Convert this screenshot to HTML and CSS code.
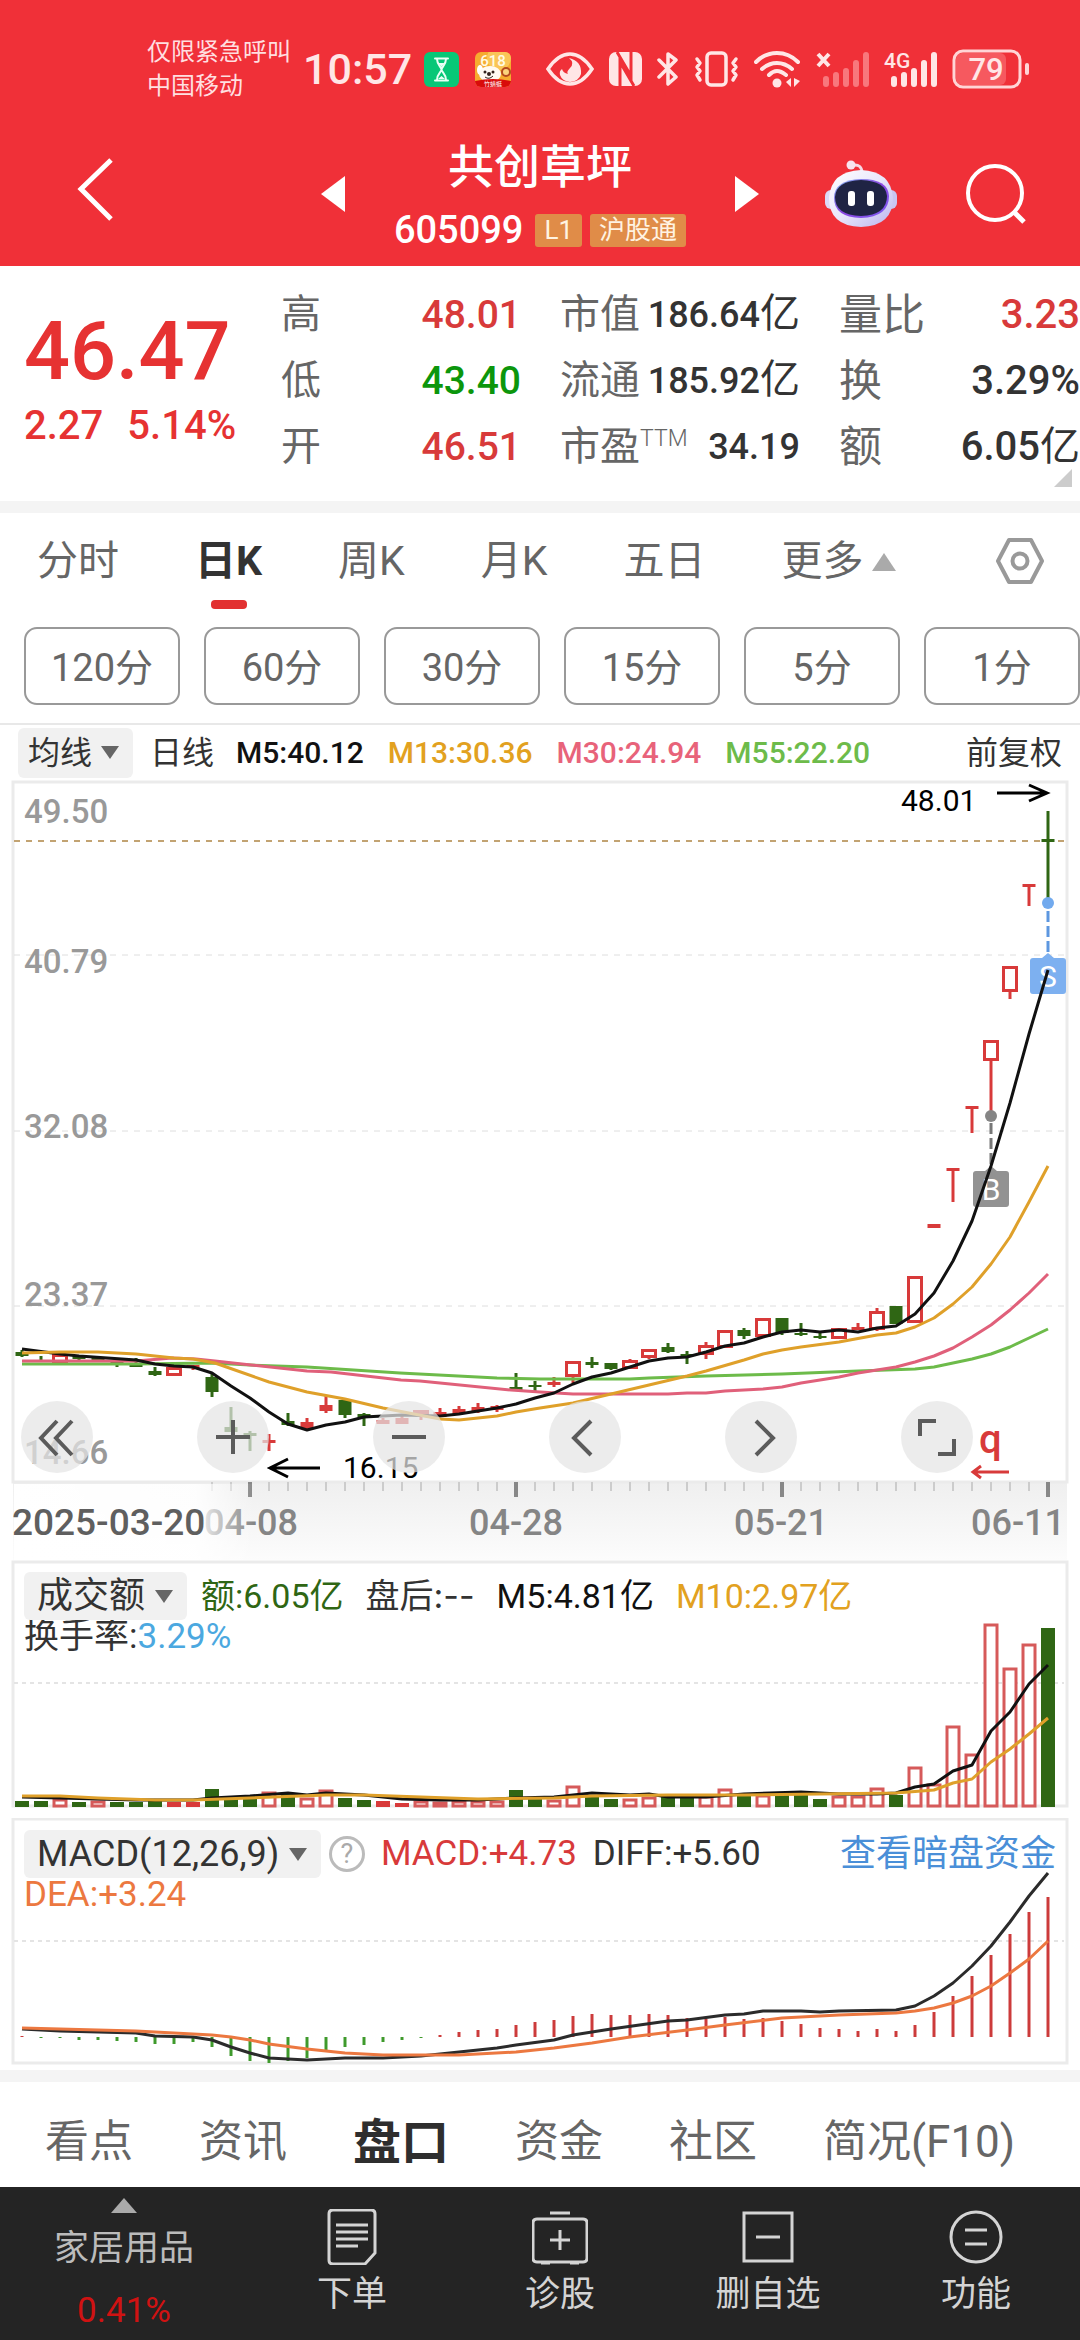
FILE: index.html
```html
<!DOCTYPE html>
<html lang="zh-CN">
<head>
<meta charset="utf-8">
<meta name="viewport" content="width=device-width, initial-scale=1">
<title>共创草坪 605099</title>
<link rel="stylesheet" href="styles.css">
</head>
<body>
<header class="top">
  <div class="status">
    <div class="status-left">
      <div class="carrier"><span>仅限紧急呼叫</span><span>中国移动</span></div>
      <time class="clock">10:57</time>
      <svg width="35" height="35" viewBox="0 0 35 35"><rect width="35" height="35" rx="6" fill="#07c777"/><g fill="none" stroke="#e9fff5" stroke-width="2" stroke-linecap="round"><path d="M11 6.500h13M11 28.500h13M13 7c0 6 4.500 8 4.500 10.500S13 22 13 28M22 7c0 6-4.500 8-4.500 10.500S22 22 22 28"/></g><path d="M14.500 11h6l-3 4zM14 27l3.500-3 3.500 3z" fill="#e9fff5"/></svg>
      <svg class="app" width="36" height="35" viewBox="0 0 36 35"><defs><clipPath id="ac"><rect width="36" height="35" rx="6"/></clipPath></defs><g clip-path="url(#ac)"><rect width="36" height="35" fill="#f6ab2f"/><circle cx="24" cy="6" r="12" fill="#fac557"/><text x="18" y="14" text-anchor="middle" font-size="15" font-weight="500" fill="#fffbe6">618</text><circle cx="31" cy="20" r="4" fill="#fbd37c" stroke="#b4481e" stroke-width="2"/><ellipse cx="5" cy="18" rx="3" ry="5" fill="#fff"/><ellipse cx="15" cy="22" rx="11" ry="8" fill="#fffaf2"/><circle cx="10" cy="20" r="1.500" fill="#33231d"/><circle cx="18" cy="20" r="1.500" fill="#33231d"/><circle cx="14" cy="22" r="2" fill="#33231d"/><path d="M10 25q4 3 8-1" stroke="#33231d" fill="none"/><path d="M0 29q18-4 36 0v6H0z" fill="#d90b0b"/><text x="18" y="34" text-anchor="middle" font-size="6" fill="#fff">竹蜻蜓</text></g></svg>
    </div>
    <div class="status-right">
      <svg width="48" height="34" viewBox="0 0 48 34"><path d="M2 17Q12 2 24 2t22 15Q36 32 24 32T2 17z" fill="none" stroke="#ffe6e6" stroke-width="3.500"/><path d="M23 6q6 5 1 10-4 4-2 6-5-1-6-5-3 2-2 6 2 6 10 7 9-1 11-8 1-13-12-16z" fill="#ffe6e6"/></svg>
      <svg width="33" height="34" viewBox="0 0 33 34"><rect width="33" height="34" rx="7" fill="#ffe6e6"/><path d="M8 0l14 24V0M11 34V10l14 24" fill="none" stroke="#f03038" stroke-width="3"/></svg>
      <svg width="22" height="36" viewBox="0 0 22 36"><path d="M2 9l17 17-8 7V3l8 6L2 26" fill="none" stroke="#ffe6e6" stroke-width="3.500" stroke-linejoin="round" stroke-linecap="round"/></svg>
      <svg width="45" height="36" viewBox="0 0 45 36"><g fill="none" stroke="#ffe6e6" stroke-width="3.500" stroke-linejoin="round" stroke-linecap="round"><rect x="13" y="2" width="19" height="32" rx="4"/><path d="M3 8l3 4-3 4 3 4-3 4 3 5M42 8l-3 4 3 4-3 4 3 4-3 5"/></g></svg>
      <svg width="47" height="38" viewBox="0 0 47 38"><g fill="none" stroke="#ffe6e6" stroke-width="4" stroke-linecap="round"><path d="M2 12Q11 3 23 3t21 9M8 19q7-6 15-6t15 6M15 25q4-4 8-4t9 4"/></g><circle cx="23" cy="33" r="4.500" fill="#ffe6e6"/><path d="M37 28v9l-5-5zM40 28v9l6-6z" fill="#ffe6e6"/></svg>
      <svg width="53" height="36" viewBox="0 0 53 36"><path d="M2 3l11 12M13 3L2 15" stroke="#ffe6e6" stroke-width="4"/><g stroke="#f8787d" stroke-width="6" stroke-linecap="round"><path d="M10 28v5M20 24v9M30 20v13M40 12v21M50 4v29"/></g></svg>
      <svg class="network" width="53" height="36" viewBox="0 0 53 36"><text x="0" y="17" font-size="21" font-weight="500" fill="#ffe6e6">4G</text><g stroke="#ffe6e6" stroke-width="6" stroke-linecap="round"><path d="M10 28v5M20 24v9M30 20v13M40 12v21M50 4v29"/></g></svg>
      <svg width="78" height="40" viewBox="0 0 78 40"><rect x="4" y="4" width="50" height="32" rx="6" fill="#f6595f"/><rect x="2" y="2" width="66" height="36" rx="9" fill="none" stroke="#ffd5d6" stroke-width="3"/><rect x="73" y="14" width="4" height="12" rx="2" fill="#ffd5d6"/><text x="34" y="31" text-anchor="middle" font-size="31" font-weight="500" fill="#ffe6e6">79</text></svg>
    </div>
  </div>
  <nav class="titlebar">
    <div class="nav-left"><button class="plain" aria-label="返回"><svg width="36" height="64" viewBox="0 0 36 64"><path d="M34 2L4 31l30 30" fill="none" stroke="#fff" stroke-width="5"/></svg></button></div>
    <div class="stock">
      <button class="plain" aria-label="上一只"><svg width="24" height="36" viewBox="0 0 24 36"><path d="M24 0v36L0 18z" fill="#fff"/></svg></button>
      <div class="stock-name"><h1>共创草坪</h1><p><span>605099</span><b class="tag">L1</b><b class="tag">沪股通</b></p></div>
      <button class="plain" aria-label="下一只"><svg width="24" height="36" viewBox="0 0 24 36"><path d="M0 0v36l24-18z" fill="#fff"/></svg></button>
    </div>
    <div class="nav-right">
      <button class="plain" aria-label="智能助手"><svg width="72" height="68" viewBox="0 0 72 68"><defs><linearGradient id="rb" x1="0" y1="0" x2="1" y2="1"><stop offset="0" stop-color="#fff"/><stop offset=".5" stop-color="#e9e6fb"/><stop offset="1" stop-color="#b9b4ee"/></linearGradient><linearGradient id="rf" x1="0" y1="0" x2="1" y2="1"><stop offset="0" stop-color="#7fb8f0"/><stop offset=".5" stop-color="#8b46e0"/><stop offset="1" stop-color="#7a5cf0"/></linearGradient></defs><path d="M37 13q0-9-9-8" fill="none" stroke="#f7d9e4" stroke-width="3"/><circle cx="26" cy="5" r="4.500" fill="#f8e4ee"/><rect x="0" y="30" width="12" height="19" rx="6" fill="#dcd9f7"/><rect x="60" y="30" width="12" height="19" rx="6" fill="#c9c5f2"/><path d="M36 10q30 1 32 28 0 28-32 29Q4 66 4 38 6 11 36 10z" fill="url(#rb)"/><path d="M36 19q27 0 28 17 0 21-28 22Q9 57 9 38 9 20 36 19z" fill="url(#rf)"/><path d="M36 20q25 1 26 16 0 19-26 20-26-1-26-19 1-16 26-17z" fill="#1f2444"/><rect x="23" y="31" width="7" height="15" rx="3" fill="#fff"/><rect x="42" y="31" width="7" height="15" rx="3" fill="#fff"/></svg></button>
      <button class="plain" aria-label="搜索"><svg width="60" height="60" viewBox="0 0 60 60"><circle cx="29" cy="29" r="27" fill="none" stroke="#fff" stroke-width="4"/><path d="M48 48l10 10" stroke="#fff" stroke-width="5"/></svg></button>
    </div>
  </nav>
</header>

<main>
<section class="quote">
  <div class="price"><strong>46.47</strong><p><span>2.27</span><span>5.14%</span></p></div>
  <dl><div><dt>高</dt><dd class="up">48.01</dd></div><div><dt>低</dt><dd class="down">43.40</dd></div><div><dt>开</dt><dd class="up">46.51</dd></div></dl>
  <dl class="caps"><div><dt>市值</dt><dd>186.64<i>亿</i></dd></div><div><dt>流通</dt><dd>185.92<i>亿</i></dd></div><div><dt>市盈<sup>TTM</sup></dt><dd>34.19</dd></div></dl>
  <dl class="ratios"><div><dt>量比</dt><dd class="up">3.23</dd></div><div><dt>换</dt><dd>3.29%</dd></div><div><dt>额</dt><dd>6.05<i>亿</i></dd></div></dl>
  <span class="corner"></span>
</section>

<nav class="periods">
  <button>分时</button><button class="active">日K</button><button>周K</button><button>月K</button><button>五日</button><button class="more">更多</button>
  <button class="settings" aria-label="图表设置"><svg width="50" height="48" viewBox="0 0 50 48"><path d="M14 3h22l11 21-11 21H14L3 24z" fill="none" stroke="#999" stroke-width="4" stroke-linejoin="round"/><circle cx="25" cy="24" r="7.500" fill="none" stroke="#999" stroke-width="4"/></svg></button>
</nav>
<div class="minutes"><button>120分</button><button>60分</button><button>30分</button><button>15分</button><button>5分</button><button>1分</button></div>

<div class="averages">
  <label class="picker small"><select aria-label="主图指标"><option>均线</option></select></label>
  <span class="kind">日线</span>
  <div class="values"><span class="c-black">M5:40.12</span><span class="c-gold">M13:30.36</span><span class="c-pink">M30:24.94</span><span class="c-green">M55:22.20</span></div>
  <button class="adjust">前复权</button>
</div>

<section class="kline">
  <svg class="plot" viewBox="0 780 1080 780" role="img" aria-label="日K线图">
    <defs>
      <linearGradient id="ax" x1="0" y1="0" x2="0" y2="1"><stop offset="0" stop-color="#efefef"/><stop offset="1" stop-color="#fcfcfc"/></linearGradient>
      <linearGradient id="fade" x1="0" y1="0" x2="1" y2="0"><stop offset="0" stop-color="#fff"/><stop offset=".76" stop-color="#fff" stop-opacity=".9"/><stop offset="1" stop-color="#fff" stop-opacity="0"/></linearGradient>
    </defs>
    <rect x="13" y="1482" width="1054" height="78" fill="url(#ax)"/>
    <rect x="13" y="782" width="1054" height="700" class="frame"/>
    <path d="M14 955h1050M14 1131h1050M14 1306h1050" class="grid"/>
    <path d="M14 841h1050" class="last"/>
    <g class="scale"><text x="24" y="823">49.50</text><text x="24" y="973">40.79</text><text x="24" y="1138">32.08</text><text x="24" y="1306">23.37</text><text x="24" y="1464">14.66</text></g>
    <g id="candles"></g>
    <path d="M1048 911v44" stroke="#5d97e0" stroke-width="3" stroke-dasharray="11 4"/>
    <path d="M991 1123v44" stroke="#777" stroke-width="3" stroke-dasharray="11 4"/>
    <circle cx="1048" cy="903" r="6" fill="#72aaee"/><circle cx="991" cy="1116" r="6" fill="#858585"/>
    <path d="M1033 958h9l6-5 6 5h9q3 0 3 3v30q0 3-3 3h-30q-3 0-3-3v-30q0-3 3-3z" fill="#7db0f0"/>
    <path d="M976 1171h9l6-5 6 5h9q3 0 3 3v30q0 3-3 3h-30q-3 0-3-3v-30q0-3 3-3z" fill="#929292"/>
    <g class="mark"><text x="1048" y="987">S</text><text x="991" y="1200">B</text></g>
    <g id="ma" class="lines"></g>
    <g class="note"><text x="901" y="811">48.01</text><text x="343" y="1478">16.15</text></g>
    <path d="M997 793h50m-18-8l18 8-18 8M320 1468h-50m18-9l-18 9 18 9" class="arrow"/>
    <text x="979" y="1453" class="q">q</text><path d="M1009 1472h-36m8-6l-8 6 8 6" stroke="#d83a3a" stroke-width="3" fill="none"/>
    <g id="ticks"></g>
    <g class="dates"><text x="251" y="1535">04-08</text><text x="516" y="1535">04-28</text><text x="781" y="1535">05-21</text><text x="1018" y="1535">06-11</text></g>
    <rect x="14" y="1484" width="240" height="76" fill="url(#fade)"/>
    <text x="12" y="1535" class="start">2025-03-20</text>
  </svg>
  <div class="controls">
    <button aria-label="展开"><svg viewBox="0 0 72 72"><path d="M36 20L20 37l16 17M51 20L35 37l16 17"/></svg></button>
    <button aria-label="放大"><svg viewBox="0 0 72 72"><path d="M19 36h34M36 19v34"/></svg></button>
    <button aria-label="缩小"><svg viewBox="0 0 72 72"><path d="M19 36h34"/></svg></button>
    <button aria-label="左移"><svg viewBox="0 0 72 72"><path d="M42 20L25 37l17 17"/></svg></button>
    <button aria-label="右移"><svg viewBox="0 0 72 72"><path d="M31 20l17 17-17 17"/></svg></button>
    <button aria-label="全屏"><svg viewBox="0 0 72 72"><path d="M19 35V20h16M53 38v15H37"/></svg></button>
  </div>
</section>

<section class="panel">
  <svg class="plot" viewBox="0 1560 1080 248" role="img" aria-label="成交额">
    <rect x="13" y="1562" width="1054" height="244" class="frame"/><path d="M14 1683h1050" class="dots"/>
    <g id="volume"></g><g id="volume-ma" class="lines"></g>
  </svg>
  <div class="legend">
    <div class="row"><label class="picker"><select aria-label="副图指标"><option>成交额</option></select></label>
      <span class="c-darkgreen">额:6.05亿</span><span class="dash">盘后:--</span><span class="c-black">M5:4.81亿</span><span class="c-gold">M10:2.97亿</span></div>
    <div class="row second"><span>换手率:<em>3.29%</em></span></div>
  </div>
</section>

<section class="panel">
  <svg class="plot" viewBox="0 1818 1080 247" role="img" aria-label="MACD">
    <rect x="13" y="1819" width="1054" height="244" class="frame"/><path d="M14 1941h1050" class="dots"/>
    <g id="macd"></g><g id="macd-lines" class="lines"></g>
  </svg>
  <div class="legend">
    <div class="row tight"><label class="picker"><select aria-label="副图指标"><option>MACD(12,26,9)</option></select></label>
      <button class="help" aria-label="说明">?</button><span class="c-red">MACD:+4.73</span><span>DIFF:+5.60</span><a href="#funds">查看暗盘资金</a></div>
    <div class="row second"><span class="c-orange">DEA:+3.24</span></div>
  </div>
</section>

<nav class="sections"><a href="#view">看点</a><a href="#news">资讯</a><a href="#book" class="active">盘口</a><a href="#funds">资金</a><a href="#community">社区</a><a href="#profile">简况(F10)</a></nav>
</main>

<footer class="actions">
  <button class="sector"><i></i><span>家居用品</span><b>0.41%</b></button>
  <button><svg width="56" height="56" viewBox="0 0 56 56"><path d="M9 1h38q4 0 4 4v39L41 55H9q-4 0-4-4V5q0-4 4-4zM12 16h32M12 23h32M12 30h32M12 37h22"/></svg><span>下单</span></button>
  <button><svg width="56" height="56" viewBox="0 0 56 56"><path d="M5 10h46q4 0 4 4v35q0 4-4 4H5q-4 0-4-4V14q0-4 4-4zM18 4h20M28 21v20M18 31h20M9 54h9M38 54h9"/></svg><span>诊股</span></button>
  <button><svg width="56" height="56" viewBox="0 0 56 56"><path d="M4 4h48v48H4zM16 28h24"/></svg><span>删自选</span></button>
  <button><svg width="56" height="56" viewBox="0 0 56 56"><circle cx="28" cy="28" r="25"/><path d="M17 21h22M17 35h22"/></svg><span>功能</span></button>
</footer>
<script src="charts.js"></script>
</body>
</html>
```

FILE: styles.css
```css
* { box-sizing: border-box; }
body { margin: 0; background: #fff; color: #333; font-family: Roboto, "Noto Sans CJK SC", sans-serif; font-size: 34px; }
h1, p, dl, dd { margin: 0; }
button, select { margin: 0; padding: 0; border: 0; background: none; color: inherit; font: inherit; }
a { color: inherit; text-decoration: none; }
svg { display: block; flex: none; }
svg text { font-family: Roboto, "Noto Sans CJK SC", sans-serif; }

.top { background: #f03038; color: #fff; padding-bottom: 9px; }
.status { display: flex; justify-content: space-between; align-items: center; height: 131px; padding: 7px 50px 0 147px; }
.status-left, .status-right { display: flex; align-items: center; }
.status-left { gap: 12px; }
.status-right { gap: 15px; }
.carrier { display: flex; flex-direction: column; font-size: 24px; line-height: 34px; color: #ffdfe0; white-space: nowrap; }
.clock { font-size: 43px; font-weight: 500; color: #ffe6e6; }
.app { margin-left: 4px; }
.network { overflow: visible; }
.titlebar { display: grid; grid-template-columns: 1fr 438px 1fr; align-items: center; }
.nav-left { padding-left: 77px; }
.nav-right { display: flex; align-items: center; justify-content: flex-end; gap: 69px; padding-right: 54px; }
.stock { display: flex; align-items: center; justify-content: space-between; }
.stock-name { text-align: center; }
.stock-name h1 { font-size: 46px; font-weight: 500; line-height: 72px; }
.stock-name p { display: flex; align-items: center; gap: 8px; height: 54px; font-size: 38px; font-weight: 500; }
.stock-name p span { margin-right: 4px; }
.tag { background: #e08c48; border-radius: 3px; padding: 0 9px; font-size: 26px; font-weight: 400; line-height: 33px; color: #fff3e2; }

.quote { position: relative; display: grid; grid-template-columns: minmax(0, 218fr) minmax(0, 240fr) minmax(0, 240fr) minmax(0, 241fr); column-gap: 39px; padding: 16px 0 21px 24px; border-bottom: 12px solid #f4f4f4; white-space: nowrap; }
.price { padding-top: 22px; color: #e63232; }
.price strong { display: block; font-size: 81px; font-weight: 500; line-height: 96px; }
.price p { display: flex; gap: 24px; font-size: 40px; font-weight: 500; line-height: 52px; }
.quote dl > div { display: flex; justify-content: space-between; height: 66px; line-height: 66px; }
.quote dt { font-size: 40px; color: #666; }
.quote dd { font-size: 39px; font-weight: 500; }
.quote .caps dd { font-size: 36px; }
.quote .ratios dt { font-size: 43px; }
.quote .ratios dd { font-size: 40px; }
.quote dd i { font-size: 40px; font-style: normal; font-weight: 400; line-height: 1px; }
.quote sup { font-size: 23px; font-weight: 300; line-height: 1px; }
.up { color: #d83a3a; }
.down { color: #0c960c; }
.corner { position: absolute; right: 8px; bottom: 14px; border-left: 18px solid transparent; border-bottom: 18px solid #ccc; }

.periods { display: flex; align-items: center; gap: 76px; height: 96px; padding: 0 35px 0 37px; font-size: 41px; color: #666; }
.periods button { position: relative; line-height: 96px; white-space: nowrap; }
.periods .active { color: #333; font-weight: 700; }
.periods .active::after { content: ""; position: absolute; left: 50%; bottom: 0; width: 36px; height: 9px; margin-left: -18px; border-radius: 4px; background: #e23131; }
.periods .more::after { content: ""; display: inline-block; margin-left: 8px; vertical-align: 4px; border: 12px solid transparent; border-top: 0; border-bottom: 18px solid #aaa; }
.periods .settings { margin-left: auto; }
.minutes { display: flex; gap: 24px; padding: 18px 0 18px 24px; border-bottom: 2px solid #e8e8e8; }
.minutes button { flex: 1; height: 78px; padding-bottom: 4px; border: 2px solid #999; border-radius: 13px; font-size: 38px; color: #666; }

.averages { display: flex; align-items: center; height: 55px; padding: 0 18px; font-size: 32px; line-height: 50px; white-space: nowrap; }
.kind { margin: 0 22px 0 17px; }
.values { display: flex; gap: 24px; font-size: 30px; font-weight: 500; }
.adjust { margin-left: auto; }
.picker { position: relative; display: inline-flex; flex: none; }
.picker select { appearance: none; height: 48px; padding: 0 41px 0 13px; border-radius: 6px; background: #f1f1f1; font-size: 36px; }
.picker.small select { height: 50px; padding: 0 40px 0 10px; font-size: 32px; }
.picker::after { content: ""; position: absolute; right: 14px; top: 18px; border: 9px solid transparent; border-bottom: 0; border-top: 13px solid #666; pointer-events: none; }
.c-black { color: #111; }
.c-gold { color: #e2a120; }
.c-pink { color: #e8637a; }
.c-green { color: #6dbb4a; }
.c-darkgreen { color: #2f6614; }
.c-red { color: #d83a3a; }
.c-orange { color: #ec7840; }

.plot { width: 100%; height: auto; }
.frame { fill: none; stroke: #ebebeb; stroke-width: 3; }
.grid { stroke: #dedede; stroke-width: 1; stroke-dasharray: 6 6; }
.dots { stroke: #e4e4e4; stroke-width: 2; stroke-dasharray: 4 4; }
.last { stroke: #c2a372; stroke-width: 2; stroke-dasharray: 6 6; }
.scale { font-size: 33px; font-weight: 500; fill: #999; }
.note { font-size: 30px; }
.arrow { fill: none; stroke: #000; stroke-width: 3; }
.mark { font-size: 30px; fill: #fff; text-anchor: middle; }
.q { font-size: 40px; font-weight: 500; fill: #d83a3a; }
.dates { font-size: 36px; font-weight: 500; fill: #858585; text-anchor: middle; }
.start { font-size: 37px; font-weight: 500; fill: #5f5f5f; }
.lines path { fill: none; stroke-width: 3; stroke-linejoin: round; }
.kline { position: relative; }
.controls { position: absolute; left: 21px; right: 107px; bottom: 87px; display: flex; justify-content: space-between; }
.controls button { width: 72px; height: 72px; border-radius: 50%; background: rgba(228, 228, 228, .72); }
.controls svg { width: 72px; height: 72px; fill: none; stroke: #5b5b5b; stroke-width: 4; }

.panel { display: grid; margin-bottom: 10px; }
.panel .plot, .legend { grid-area: 1 / 1; }
.panel + .panel { margin-bottom: 5px; }
.legend { padding: 12px 24px 0; line-height: 44px; white-space: nowrap; }
.row { display: flex; align-items: center; gap: 22px; height: 48px; }
.row.tight { gap: 16px; font-size: 35px; }
.row .picker { margin-right: -8px; }
.row.second { height: 34px; font-size: 35px; }
.row em { font-style: normal; color: #4ba8e0; }
.row a { margin-left: auto; font-size: 36px; color: #4a8fd8; }
.dash { font-family: Inter, "Noto Sans CJK SC", sans-serif; }
.help { width: 36px; height: 36px; border: 3px solid #bbb; border-radius: 50%; font-size: 27px; line-height: 30px; color: #aaa; }

.sections { display: flex; align-items: center; gap: 66px; height: 117px; padding: 6px 0 0 45px; border-top: 12px solid #f4f4f4; font-size: 44px; color: #666; white-space: nowrap; }
.sections .active { font-size: 48px; font-weight: 700; color: #2e2e2e; }

.actions { display: grid; grid-template-columns: 248fr repeat(4, 208fr); height: 153px; background: #242424; color: #d4d4d4; font-size: 35px; }
.actions button { display: flex; flex-direction: column; align-items: center; padding-top: 22px; line-height: 60px; }
.actions svg { fill: none; stroke: #d4d4d4; stroke-width: 3; }
.actions .sector { padding-top: 11px; color: #bbb; line-height: 72px; }
.sector i { border: 13px solid transparent; border-top: 0; border-bottom: 15px solid #aaa; }
.sector b { margin-top: -10px; font-weight: 400; color: #d01212; }
```

FILE: charts.js
```js
const RED = '#d83a3a', GREEN = '#2f6614';
const x = i => 22 + 19 * i;
const put = (id, markup) => { document.getElementById(id).innerHTML = markup; };

// kind, high, body top, body bottom, low; g = falling, r = rising (hollow), f = rising (thin, filled)
const candles = [
  ['g',1350,1352,1356,1357],['g',1356,1360,1362,1362],['r',1354,1354,1363,1363],['g',1355,1355,1359,1362],['g',1358,1358,1361,1361],
  ['g',1358,1361,1363,1367],['g',1358,1364,1367,1367],['g',1367,1371,1375,1376],['r',1367,1367,1376,1376],['f',1365,1365,1368,1370],
  ['g',1374,1377,1392,1397],['g',1407,1427,1432,1432],['g',1431,1433,1436,1451],['f',1434,1440,1443,1451],['g',1413,1421,1425,1426],
  ['f',1418,1422,1428,1429],['f',1395,1405,1411,1413],['g',1399,1400,1415,1418],['g',1413,1414,1417,1426],['f',1418,1420,1424,1424],
  ['f',1416,1418,1424,1424],['r',1410,1410,1416,1420],['f',1408,1412,1417,1417],['f',1406,1409,1414,1414],['f',1403,1407,1411,1413],
  ['f',1405,1406,1410,1412],['g',1373,1387,1390,1390],['g',1381,1385,1387,1391],['f',1377,1382,1385,1387],['r',1361,1361,1377,1383],
  ['g',1357,1362,1365,1368],['g',1363,1363,1369,1370],['r',1359,1360,1369,1369],['r',1349,1349,1358,1359],['g',1343,1347,1352,1353],
  ['g',1351,1354,1356,1364],['r',1342,1345,1355,1359],['r',1330,1330,1348,1348],['g',1328,1330,1336,1339],['r',1318,1318,1337,1337],
  ['g',1318,1318,1333,1335],['g',1323,1333,1335,1336],['g',1332,1336,1338,1339],['r',1328,1328,1339,1339],['f',1323,1327,1330,1330],
  ['r',1308,1311,1330,1331],['g',1306,1306,1324,1324],['r',1276,1276,1323,1323],['f',1224,1224,1228,1228],['f',1168,1168,1171,1202],
  ['f',1106,1106,1109,1133],['r',1040,1040,1061,1117],['r',966,966,992,999],['f',884,884,887,906],['g',811,839,842,902]
];
candles[49] = ['f',1168,1168,1171,1202];
put('candles', candles.map(([k, hi, top, bot, lo], i) => {
  const c = k === 'g' ? GREEN : RED, cx = x(i);
  const wick = `<path d="M${cx} ${hi}V${top}M${cx} ${bot}V${lo}" stroke="${c}" stroke-width="3"/>`;
  const body = k === 'r'
    ? `<rect x="${cx - 6.5}" y="${top + 1.5}" width="13" height="${bot - top - 3}" fill="#fff" stroke="${c}" stroke-width="3"/>`
    : `<rect x="${cx - 6.5}" y="${top}" width="13" height="${bot - top}" fill="${c}"/>`;
  return wick + body;
}).join(''));

const line = (pts, color) => `<path d="M${pts}" stroke="${color}"/>`;
put('ma',
  line('22 1364 136 1364 212 1363 250 1365 307 1367 400 1373 497 1378 540 1379 630 1379 649 1378 706 1376 782 1374 858 1371 915 1369 934 1367 953 1363 972 1359 991 1354 1010 1347 1029 1338 1048 1329', '#6dbb4a') +
  line('22 1361 136 1361 172 1358 196 1359 215 1361 251 1365 307 1371 331 1372 401 1380 420 1381 511 1390 540 1392 573 1394 668 1394 687 1393 706 1393 725 1391 763 1389 782 1387 801 1383 839 1377 858 1373 896 1367 915 1362 934 1356 953 1348 972 1337 991 1325 1010 1310 1029 1293 1048 1274', '#e0607a') +
  line('22 1349 60 1354 79 1356 136 1360 155 1364 174 1366 193 1367 212 1373 231 1386 250 1398 269 1412 288 1424 307 1430 326 1425 345 1422 364 1417 402 1415 440 1416 459 1414 478 1411 497 1408 516 1404 535 1398 554 1393 573 1384 592 1377 611 1373 630 1367 649 1361 668 1358 687 1357 706 1352 725 1346 744 1343 763 1337 782 1332 801 1330 820 1332 839 1330 858 1332 877 1328 896 1326 915 1314 934 1293 953 1261 972 1221 991 1166 1010 1103 1029 1034 1048 970', '#111') +
  line('22 1353 60 1352 98 1352 136 1354 174 1358 193 1359 215 1363 269 1382 307 1392 345 1399 383 1408 414 1414 440 1419 459 1420 497 1416 516 1412 540 1408 573 1403 611 1394 649 1385 687 1376 706 1371 744 1360 763 1354 782 1350 801 1347 839 1342 877 1335 896 1333 915 1327 934 1318 953 1304 972 1287 991 1264 1010 1237 1029 1202 1048 1166', '#dfa02a'));

let ticks = '';
for (let i = 10; i < 55; i++) {
  const major = (i - 12) % 14 === 0;
  ticks += `<path d="M${x(i)} 1482v${major ? 15 : 9}" stroke="${major ? '#888' : '#ccc'}" stroke-width="${major ? 4 : 2}"/>`;
}
put('ticks', ticks);

const kinds = 'ggrgrggg' + 'ffgggrgrrgg' + 'ffrrrrr' + 'ggrrggrrggrrgrgggrrrgrrrrrrrg';
const tops = [1801,1801,1799,1802,1801,1802,1802,1801,1802,1802,1789,1798,1798,1792,1794,1798,1790,1798,1800,1801,1803,1801,1802,1801,1801,1801,1790,1799,1800,1786,1796,1799,1799,1797,1797,1797,1796,1789,1796,1795,1795,1795,1799,1796,1796,1788,1795,1767,1784,1726,1754,1624,1668,1644,1628];
put('volume', tops.map((t, i) => kinds[i] === 'r'
  ? `<rect x="${x(i) - 6}" y="${t + 1}" width="12" height="${1805 - t}" fill="#fff" stroke="#d65a5a" stroke-width="3"/>`
  : `<rect x="${x(i) - 7}" y="${t}" width="14" height="${1807 - t}" fill="${kinds[i] === 'g' ? GREEN : RED}"/>`).join(''));
put('volume-ma',
  line('22 1797 98 1799 136 1800 193 1800 212 1798 250 1796 288 1793 307 1795 326 1793 364 1795 402 1799 440 1800 478 1800 516 1798 554 1797 592 1793 630 1795 649 1794 668 1797 706 1797 744 1794 801 1792 839 1794 877 1794 896 1793 915 1787 934 1784 953 1771 972 1765 991 1731 1010 1712 1029 1684 1048 1665', '#111') +
  line('22 1796 60 1796 98 1798 155 1800 193 1800 250 1798 326 1795 364 1795 421 1797 478 1799 554 1798 573 1797 592 1796 668 1795 744 1795 820 1794 896 1793 934 1790 953 1783 972 1779 991 1762 1010 1749 1029 1734 1048 1718', '#dfa02a'));

const bars = [2036,2038,2038,2040,2040,2041,2042,2044,2044,2042,2047,2056,2061,2063,2061,2058,2050,2047,2045,2042,2040,2038,2035,2032,2030,2029,2025,2022,2020,2016,2014,2015,2015,2014,2015,2018,2019,2017,2019,2018,2021,2024,2028,2029,2031,2029,2031,2025,2012,1996,1976,1955,1934,1912,1897];
put('macd', bars.map((y, i) => `<path d="M${x(i)} 2037V${y}" stroke="${y > 2037 ? '#3f9a2c' : '#cc3b3b'}" stroke-width="3"/>`).join(''));
put('macd-lines',
  line('22 2029 60 2031 136 2033 155 2036 193 2037 212 2040 231 2047 250 2053 269 2058 307 2060 345 2058 383 2058 421 2056 459 2052 497 2048 516 2045 554 2040 573 2035 611 2029 668 2021 687 2020 725 2015 744 2014 763 2011 801 2011 820 2012 839 2011 896 2010 915 2006 934 1996 953 1983 972 1966 991 1946 1010 1922 1029 1896 1048 1873', '#2b2b2b') +
  line('22 2028 136 2031 212 2035 231 2037 250 2040 269 2044 307 2049 345 2053 383 2055 459 2055 516 2052 554 2048 592 2043 630 2037 687 2030 725 2025 782 2018 839 2015 896 2013 915 2011 934 2008 953 2003 972 1996 991 1986 1010 1973 1029 1959 1048 1941', '#ec7840'));
```
